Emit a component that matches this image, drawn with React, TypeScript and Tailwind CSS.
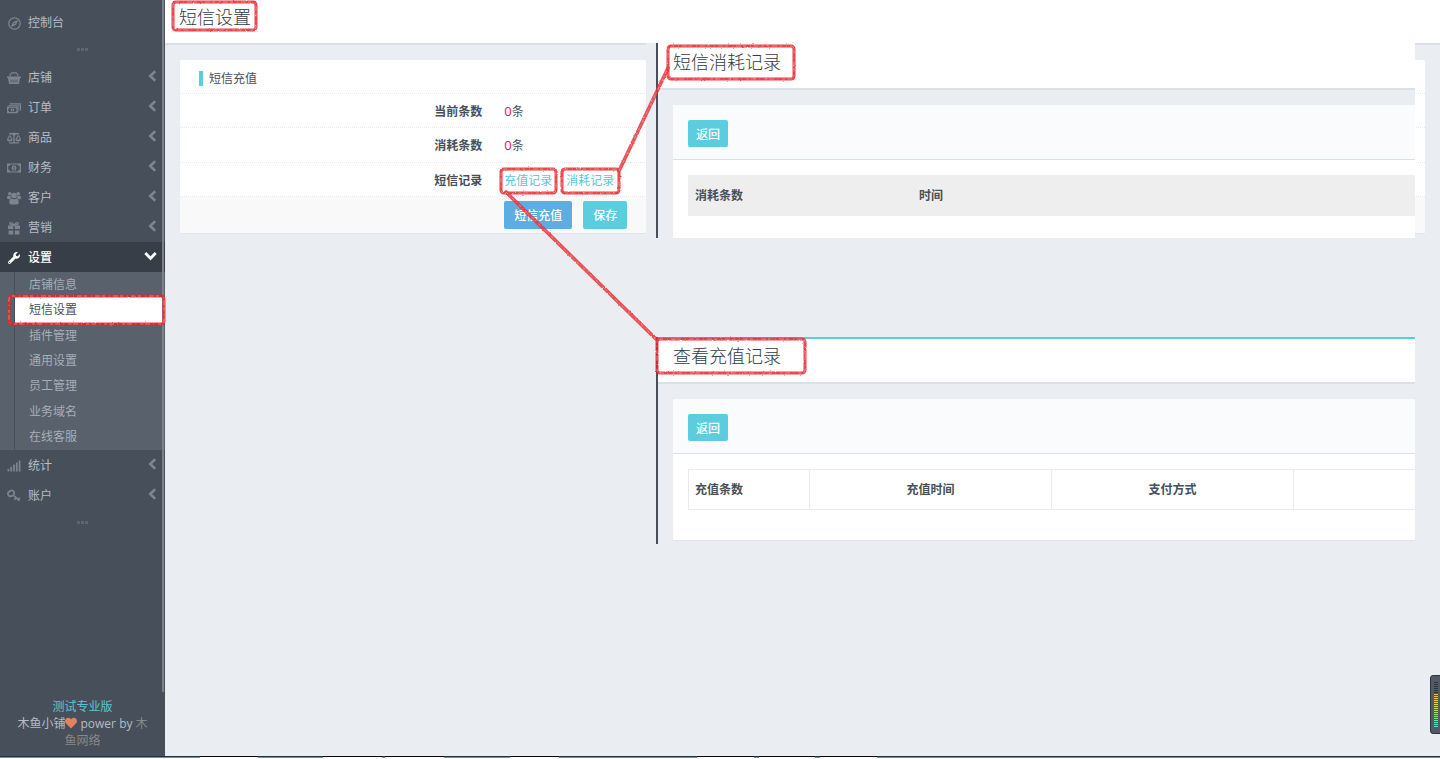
import React, { useState } from 'react';
import { FaBalanceScale, FaHeart, FaRegCompass, FaSignal, FaWrench } from 'react-icons/fa';

function BasketIcon({ className }: { className?: string }) {
  return (
    <svg viewBox="0 0 14 13" className={className} fill="currentColor" aria-hidden="true">
      <path d="M2.5 5V3L4.5 .8h5l2 2.2v2h-1.2V3.4L9 2H5L3.7 3.4V5z" />
      <path d="M0 5h14v1.6h-1L12 12.5H2L1 6.6H0z" />
      <path d="M4 8v3M6 8v3M8 8v3M10 8v3" stroke="#474f5a" strokeWidth=".8" />
    </svg>
  );
}

function CashStackIcon({ className }: { className?: string }) {
  return (
    <svg viewBox="0 0 15 12" className={className} fill="currentColor" aria-hidden="true">
      <path d="M2.8 1H15v7.6h-1.2V2.2H2.8z" />
      <path d="M1.4 2.8h11.8v7h-1.1V3.9H1.4z" opacity=".8" />
      <path fillRule="evenodd" d="M0 4.4h11.6v7.2H0zM2.4 5.8c0 .6-.5 1-1 1v2.4c.5 0 1 .4 1 1h6.8c0-.6.5-1 1-1V6.8c-.5 0-1-.4-1-1z" />
      <ellipse cx="5.8" cy="8" rx="2" ry="1.7" />
      <path d="M5.8 7v2" stroke="#474f5a" strokeWidth=".8" />
    </svg>
  );
}

function CashIcon({ className }: { className?: string }) {
  return (
    <svg viewBox="0 0 14 10" className={className} fill="currentColor" aria-hidden="true">
      <path fillRule="evenodd" d="M0 .5h14v9H0zM3 1.6c0 1-.8 1.7-1.8 1.7v3.4c1 0 1.8.7 1.8 1.7h8c0-1 .8-1.7 1.8-1.7V3.3c-1 0-1.8-.7-1.8-1.7z" />
      <ellipse cx="7" cy="5" rx="2.3" ry="2.7" />
      <path d="M6.3 4.1l.8-.5v2.9M6.1 6.5H8" stroke="#474f5a" strokeWidth=".7" fill="none" />
    </svg>
  );
}

function UsersIcon({ className }: { className?: string }) {
  return (
    <svg viewBox="0 0 14 13" className={className} fill="currentColor" aria-hidden="true">
      <circle cx="2.8" cy="2.2" r="1.8" />
      <circle cx="11.2" cy="2.2" r="1.8" />
      <circle cx="7" cy="4" r="2.8" />
      <path d="M0 6.6C0 4.8.8 4.2 1.5 4.2c.6.4 1.600.5 2.200.3C3.700 5.600 4 6.200 4.400 6.700 3.500 6.700 2.800 7.100 2.300 7.700H1.200C.5 7.700 0 7.300 0 6.600z" />
      <path d="M14 6.600C14 4.800 13.200 4.200 12.500 4.200c-.6.4-1.600.5-2.200.3 0 1.100-.3 1.700-.7 2.200.9 0 1.600.4 2.100 1h1.100c.7 0 1.200-.4 1.200-1.100z" />
      <path d="M2.300 11c0-2.600.8-3.900 2.300-3.900 1.400 1 3.400 1 4.800 0 1.500 0 2.300 1.300 2.300 3.900 0 1.200-.8 2-1.900 2H4.200c-1.100 0-1.900-.8-1.900-2z" />
    </svg>
  );
}

function GiftIcon({ className }: { className?: string }) {
  return (
    <svg viewBox="0 0 14 13" className={className} aria-hidden="true">
      <path d="M6.6 3.8C5.8 1.6 4.2.7 3.2 1.4 2.2 2.2 3 3.6 6.6 3.8zM7.4 3.8C8.2 1.6 9.8.7 10.8 1.4 11.8 2.2 11 3.6 7.4 3.8z" fill="none" stroke="currentColor" strokeWidth="1.3" />
      <path d="M1 4h5.2v3.6H1zM7.8 4H13v3.6H7.8zM1.6 9h4.6v4H1.6zM7.8 9h4.6v4H7.8z" fill="currentColor" />
    </svg>
  );
}

function KeyIcon({ className }: { className?: string }) {
  return (
    <svg viewBox="0 0 13 12" className={className} fill="none" stroke="currentColor" strokeWidth="1.6" aria-hidden="true">
      <ellipse cx="3.8" cy="3.6" rx="3" ry="2.4" transform="rotate(-35 3.8 3.6)" />
      <path d="M6 5.4l5.6 5M8.3 7.6L6.9 9.4M10.4 9.4L12 7.6" />
    </svg>
  );
}

function ChevronIcon({ className }: { className?: string }) {
  return (
    <svg viewBox="0 0 12 12" className={className} fill="none" stroke="currentColor" strokeWidth="2.6" aria-hidden="true">
      <path d="M10.2 1.2L5.2 6l5 4.8" />
    </svg>
  );
}

const topItems = [
  { label: '店铺', icon: BasketIcon },
  { label: '订单', icon: CashStackIcon },
  { label: '商品', icon: FaBalanceScale },
  { label: '财务', icon: CashIcon },
  { label: '客户', icon: UsersIcon },
  { label: '营销', icon: GiftIcon },
];

const bottomItems = [
  { label: '统计', icon: FaSignal },
  { label: '账户', icon: KeyIcon },
];

const settingItems = ['店铺信息', '短信设置', '插件管理', '通用设置', '员工管理', '业务域名', '在线客服'];

const meterColors = [
  '#2f353d', '#2f353d', '#2f353d', '#2f353d', '#2f353d', '#2f353d',
  '#f0b34a', '#f0bd48', '#efc748', '#edd04a', '#e8d850', '#dedd55', '#d2e05a', '#c4e15f',
  '#b4e267', '#a5e371', '#96e47d', '#88e48b', '#7be499', '#70e3a7', '#66e2b5', '#5ee2c2', '#58e2cf',
];

type NavItem = { label: string; icon: React.ComponentType<{ className?: string }> };

function NavLink({ item }: { item: NavItem }) {
  const Icon = item.icon;
  return (
    <a href="#" className="flex h-[30px] items-center pl-[7px] pr-2 pt-[2px] text-[#b5bdc6]">
      <Icon className="h-[14px] w-[14px] shrink-0 text-[#7c858f]" />
      <span className="ml-[7px] flex-1">{item.label}</span>
      <ChevronIcon className="mb-1 h-3 w-3 text-[#7c858f]" />
    </a>
  );
}

function Dots() {
  return (
    <div className="flex h-[25px] items-center justify-center gap-px">
      <span className="h-[3px] w-[3px] bg-[#5d6570]" />
      <span className="h-[3px] w-[3px] bg-[#5d6570]" />
      <span className="h-[3px] w-[3px] bg-[#5d6570]" />
    </div>
  );
}

function Sidebar() {
  const [active, setActive] = useState('短信设置');

  return (
    <aside className="relative flex w-[165px] shrink-0 flex-col bg-[#474f5a] pt-[7px]">
      <nav>
        <a href="#" className="flex h-[30px] items-center pl-2 pt-[2px] text-[#b5bdc6]">
          <FaRegCompass className="h-[13px] w-[13px] text-[#7c858f]" />
          <span className="ml-[7px]">控制台</span>
        </a>
        <Dots />
        {topItems.map((item) => <NavLink key={item.label} item={item} />)}

        {/* Expanded group */}
        <a href="#" className="flex h-[30px] items-center bg-[#373e48] pl-2 pr-2 pt-[2px] font-medium text-white">
          <FaWrench className="h-3 w-3" />
          <span className="ml-2 flex-1">设置</span>
          <ChevronIcon className="mb-[2px] h-[13px] w-[13px] -rotate-90" />
        </a>
        <ul className="flex h-[178px] flex-col bg-[#59616c] pl-[14px]">
          {settingItems.map((label) => (
            <li key={label} className="flex flex-1 border-l border-[#474f5a]">
              <a
                href="#"
                onClick={() => setActive(label)}
                className={`flex flex-1 items-center pl-[14px] ${
                  active === label ? 'bg-white text-[#474f5a]' : 'text-[#a6aeb8]'
                }`}
              >
                {label}
              </a>
            </li>
          ))}
        </ul>

        {bottomItems.map((item) => <NavLink key={item.label} item={item} />)}
        <Dots />
      </nav>

      <p className="mt-auto px-3 pb-[7px] text-center leading-[17px] text-[#b5bdc6]">
        <a href="#" className="block text-[#5bc4d6]">测试专业版</a>
        <span>木鱼小铺</span>
        <FaHeart className="inline h-3 w-3 align-[-1px] text-[#e2835c]" />
        <span> power by </span>
        <a href="#" className="text-[#888888]"><span>木</span><br /><span>鱼网络</span></a>
      </p>

      {/* Scroll track */}
      <div className="absolute bottom-16 right-px top-0 w-[2px] bg-[#7d8287]" />
    </aside>
  );
}

function SmsCard() {
  return (
    <section className="mx-[15px] mt-[15px] rounded-xs border-b border-[#dfe4ea] bg-white">
      <div className="flex h-[34px] items-center border-b border-dotted border-[#e6e9ed] pl-[19px] pt-[4px]">
        <span className="h-[15px] w-1 bg-[#5bcddf]" />
        <h2 className="ml-[6px]">短信充值</h2>
      </div>
      <dl>
        <div className="flex h-[34px] items-center border-b border-dotted border-[#e6e9ed] pt-[2px]">
          <dt className="w-1/4 pr-[9px] text-right font-bold">当前条数</dt>
          <dd className="ml-[13px]"><span className="text-[13px] text-[#ff0066]">0</span>条</dd>
        </div>
        <div className="flex h-[35px] items-center border-b border-dotted border-[#e6e9ed] pt-[2px]">
          <dt className="w-1/4 pr-[9px] text-right font-bold">消耗条数</dt>
          <dd className="ml-[13px]"><span className="text-[13px] text-[#ff0066]">0</span>条</dd>
        </div>
        <div className="flex h-[34px] items-center border-b border-dotted border-[#e6e9ed] pt-[2px]">
          <dt className="w-1/4 pr-[9px] text-right font-bold">短信记录</dt>
          <dd className="ml-[13px] flex gap-[14px] text-[#5bc6dc]">
            <a href="#">充值记录</a>
            <a href="#">消耗记录</a>
          </dd>
        </div>
      </dl>
      <div className="flex bg-[#f9f9f9] pb-1 pt-1">
        <div className="w-1/4" />
        <div className="ml-[13px] flex gap-[11px]">
          <button className="h-7 rounded-xs bg-[#5dade0] px-[10px] pt-px font-medium text-white">短信充值</button>
          <button className="h-7 rounded-xs bg-[#5bcddf] px-[10px] pt-px font-medium text-white">保存</button>
        </div>
      </div>
    </section>
  );
}

function RecordFrame({ title, accent, children }: { title: string; accent?: boolean; children: React.ReactNode }) {
  return (
    <section className="border-l-2 border-[#474f5a] bg-[#eaeef3]">
      <header
        className={`flex h-[47px] items-start border-b-2 border-b-[#dae0e9] bg-white pl-[15px] ${
          accent ? 'border-t-2 border-t-[#5bcddf] pt-[5px]' : 'pt-[7px]'
        }`}
      >
        <h2 className="text-[18px] font-light leading-6 text-[#333a44]">{title}</h2>
      </header>
      <div className="ml-[15px] mt-[15px] bg-white">
        <div className="h-[55px] border-b border-[#d9e0e9] bg-[#fafbfd] pl-[15px] pt-[15px]">
          <button className="h-[27px] rounded-xs bg-[#5bcddf] px-2 pt-[2px] font-medium text-white">返回</button>
        </div>
        {children}
      </div>
    </section>
  );
}

function Marks() {
  const boxes = [
    [9, 296, 155, 28],
    [173, 2, 83, 28],
    [668, 46, 126, 33],
    [501, 169, 55, 24],
    [562, 169, 57, 24],
    [657, 339, 148, 34],
  ];
  const lines = ['M619 171L668 68', 'M506 192L657 340'];

  return (
    <svg className="pointer-events-none absolute left-0 top-0 h-[400px] w-[820px]" viewBox="0 0 820 400" fill="none" aria-hidden="true">
      <filter id="crayon" x="0" y="0" width="820" height="400" filterUnits="userSpaceOnUse" colorInterpolationFilters="sRGB">
        <feTurbulence type="fractalNoise" baseFrequency=".4" numOctaves="2" seed="4" result="noise" />
        <feDisplacementMap in="SourceGraphic" in2="noise" scale="2" xChannelSelector="R" yChannelSelector="G" />
      </filter>
      <g filter="url(#crayon)">
        {boxes.map(([x, y, w, h]) => (
          <g key={`${x}-${y}`}>
            <rect x={x} y={y} width={w} height={h} rx="3" stroke="#e8232c" strokeOpacity=".85" strokeWidth="3" />
            <rect x={x} y={y} width={w} height={h} rx="3" stroke="#f79a9e" strokeOpacity=".7" strokeWidth="1" strokeDasharray="3 4 1 3 5 2" />
          </g>
        ))}
        {lines.map((d) => (
          <g key={d}>
            <path d={d} stroke="#e8323a" strokeOpacity=".85" strokeWidth="3.6" strokeLinecap="round" />
            <path d={d} stroke="#f28b8f" strokeWidth="1" strokeDasharray="3 2 1 3" />
          </g>
        ))}
      </g>
    </svg>
  );
}

function LevelMeter() {
  return (
    <svg className="absolute bottom-[22px] right-0 h-[59px] w-[10px]" viewBox="0 0 10 59" aria-hidden="true">
      <rect x=".5" y=".5" width="13" height="58" rx="2.5" fill="#535a66" stroke="#2e3540" />
      {meterColors.map((color, i) => (
        <rect key={i} x="4" y={7 + i * 2} width="4" height="1" fill={color} shapeRendering="crispEdges" />
      ))}
    </svg>
  );
}

function DesktopEdge() {
  const tabs = [[200, 58], [323, 59], [385, 59], [510, 49], [697, 57], [759, 56], [820, 57]];
  return (
    <svg className="block h-[3px] w-full bg-white" aria-hidden="true">
      <rect width="100%" height="1" fill="#20303f" />
      <rect y="1" width="100%" height="1" fill="#7797a3" />
      {tabs.map(([x, w]) => (
        <g key={x}>
          <rect x={x} width={w} height="1" fill="#05070c" />
          <rect x={x} y="1" width={w} height="1" fill="#ffffff" />
        </g>
      ))}
    </svg>
  );
}

export default function App() {
  return (
    <div className="relative flex min-h-screen flex-col overflow-hidden font-['Open_Sans','Noto_Sans_CJK_SC',sans-serif] text-xs text-[#474f5a]">
      <div className="flex flex-1">
        <Sidebar />

        <main className="relative min-w-0 flex-1 bg-[#eaeef3]">
          <header className="h-[45px] border-b-2 border-[#dae0e9] bg-white pl-[14px] pt-[5px]">
            <h1 className="text-[18px] font-light leading-6 text-[#333a44]">短信设置</h1>
          </header>
          <SmsCard />

          {/* Record windows stacked over the page */}
          <div className="absolute left-[481px] right-[25px] top-[43px]">
            <div className="border-l-[10px] border-[#eaeef3]">
              <RecordFrame title="短信消耗记录">
                <div className="pb-[22px] pl-[15px] pt-[15px]">
                  <table className="w-full text-left">
                    <thead>
                      <tr className="h-[41px] bg-[#eeeeee]">
                        <th className="w-[224px] px-[7px] font-bold">消耗条数</th>
                        <th className="px-[7px] font-bold">时间</th>
                      </tr>
                    </thead>
                  </table>
                </div>
              </RecordFrame>
            </div>

            <div className="ml-[10px] mt-[99px]">
              <RecordFrame title="查看充值记录" accent>
                <div className="border-b border-[#dfe4ea] pb-[30px] pl-[15px] pt-[15px]">
                  <table className="w-full table-fixed border-separate border-spacing-0 border-y border-l border-[#e8ecf1]">
                    <thead>
                      <tr className="h-[39px]">
                        <th className="w-1/6 border-r border-[#e8ecf1] px-[6px] text-left font-bold">充值条数</th>
                        <th className="w-1/3 border-r border-[#e8ecf1] font-bold">充值时间</th>
                        <th className="w-1/3 border-r border-[#e8ecf1] font-bold">支付方式</th>
                        <th className="w-1/6" />
                      </tr>
                    </thead>
                  </table>
                </div>
                <div className="h-[3px] bg-[#eaeef3]" />
              </RecordFrame>
            </div>
          </div>

          <LevelMeter />
        </main>
      </div>
      <DesktopEdge />
      <Marks />
    </div>
  );
}
